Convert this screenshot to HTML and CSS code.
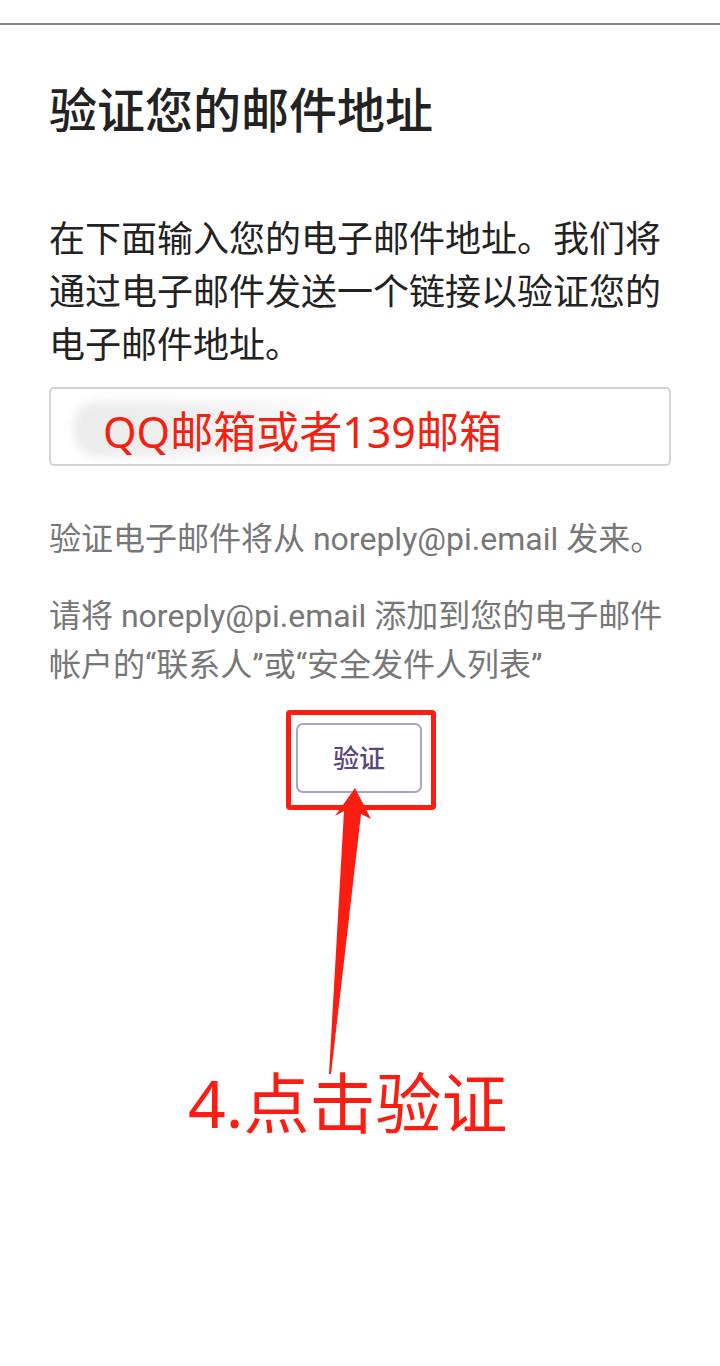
FILE: index.html
```html
<!DOCTYPE html>
<html lang="zh-CN">
<head>
<meta charset="utf-8">
<title>验证您的邮件地址</title>
<link rel="stylesheet" href="styles.css">
</head>
<body>
<div class="topbar"></div>
<main class="page">
  <h1 class="title">验证您的邮件地址</h1>
  <p class="intro">在下面输入您的电子邮件地址。我们将通过电子邮件发送一个链接以验证您的电子邮件地址。</p>
  <div class="field">
    <div class="smudge"></div>
    <span class="field-note">QQ邮箱或者139邮箱</span>
  </div>
  <p class="note note-first">验证电子邮件将从 noreply@pi.email 发来。</p>
  <p class="note">请将 noreply@pi.email 添加到您的电子邮件帐户的“联系人”或“安全发件人列表”</p>
  <div class="annot">
    <div class="btn-wrap">
      <div class="highlight">
        <button class="verify">验证</button>
      </div>
    </div>
    <svg class="arrow" width="720" height="380" viewBox="0 0 720 380" xmlns="http://www.w3.org/2000/svg">
      <polygon points="355,78 371,109 361,104 331,364 329,364 344,101 335,106" fill="#fb1d12"/>
    </svg>
    <div class="caption">4.点击验证</div>
  </div>
</main>
</body>
</html>
```
FILE: styles.css
```css
html, body {
  margin: 0;
  padding: 0;
  background: #ffffff;
}
body {
  font-family: Roboto, "Noto Sans CJK SC", "Noto Sans", sans-serif;
  width: 720px;
}
.topbar {
  height: 23px;
  border-bottom: 2px solid #848484;
}
.page {
  padding: 0 49px 0 49px;
}
.title {
  margin: 52px 0 0 0;
  font-size: 48px;
  line-height: 60px;
  font-weight: 500;
  color: #222222;
  font-family: "Noto Sans CJK SC", sans-serif;
}
.intro {
  margin: 73px 0 0 0;
  font-size: 36px;
  line-height: 53px;
  color: #222222;
  font-family: "Noto Sans CJK SC", sans-serif;
  letter-spacing: 0;
}
.field {
  position: relative;
  margin-top: 18px;
  height: 75px;
  border: 2px solid #d3d3d3;
  border-radius: 5px;
  display: flex;
  align-items: center;
  padding-left: 52px;
  overflow: hidden;
}
.smudge {
  position: absolute;
  left: 22px;
  top: 12px;
  width: 270px;
  height: 56px;
  border-radius: 26px 10px 10px 26px;
  background: linear-gradient(90deg, #ebebeb 0%, #efefef 40%, rgba(242,242,242,0.7) 75%, rgba(255,255,255,0) 100%);
  filter: blur(5px);
}
.field-note {
  position: relative;
  font-size: 43px;
  line-height: 1;
  color: #f5200f;
  font-family: "Noto Sans", "Noto Sans CJK SC", sans-serif;
  margin-top: 10px;
}
.note {
  margin: 28px 0 0 0;
  font-size: 32px;
  line-height: 49px;
  color: #777777;
}
.note-first {
  margin-top: 49px;
}
.annot {
  position: relative;
  margin: 20px -49px 0 -49px;
}
.btn-wrap {
  display: flex;
  justify-content: center;
  padding-left: 2px;
}
.highlight {
  width: 140px;
  height: 82px;
  border: 5px solid #fb1d12;
  border-radius: 4px;
  display: flex;
  align-items: flex-start;
  justify-content: center;
  padding-top: 8px;
  box-sizing: content-box;
}
.verify {
  width: 126px;
  height: 70px;
  margin-top: 0;
  margin-left: -4px;
  padding: 0 0 4px 0;
  border: 2px solid #aaa4c6;
  border-radius: 7px;
  background: #ffffff;
  font-family: "Noto Sans CJK SC", sans-serif;
  font-size: 26px;
  font-weight: 500;
  color: #5a4780;
}
.arrow {
  position: absolute;
  left: 0;
  top: 0;
}
.caption {
  margin-top: 252px;
  text-align: left;
  padding-left: 188px;
  font-size: 66px;
  line-height: 80px;
  color: #fb1d12;
  font-family: "Noto Sans", "Noto Sans CJK SC", sans-serif;
}
```
